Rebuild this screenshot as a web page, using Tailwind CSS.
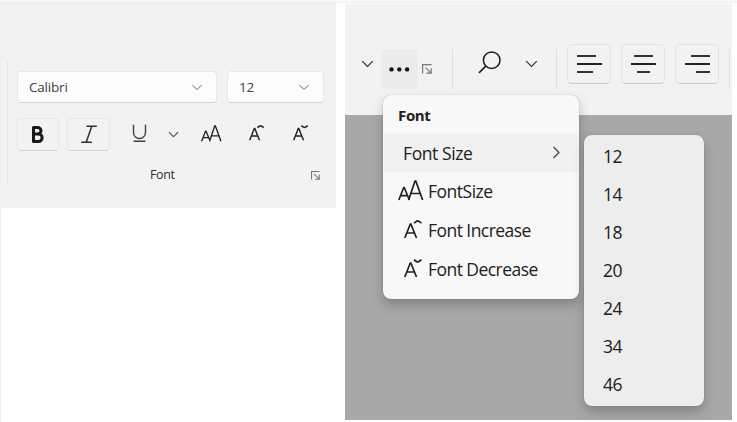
<!DOCTYPE html>
<html lang="en">
<head>
<meta charset="utf-8">
<title>Ribbon</title>
<script src="https://cdn.jsdelivr.net/npm/@tailwindcss/browser@4"></script>
</head>
<body class="relative h-[422px] w-[737px] overflow-hidden bg-white font-['Open_Sans','Noto_Sans',sans-serif] text-[#202020]">
<svg class="hidden">
  <defs>
    <symbol id="chev" viewBox="0 0 12 8"><path d="M.7 1.2 6 6.5l5.3-5.3" fill="none" stroke="currentColor" stroke-width="1.2"/></symbol>
    <symbol id="launch" viewBox="0 0 10 10"><path d="M.6 9.5V.6h8.9M3.6 3.6l5.2 5.2M9.2 4.2v5H4.3" fill="none" stroke="currentColor" stroke-width="1.2"/></symbol>
    <symbol id="aa" viewBox="0 0 26 21"><path d="M.8 20 5.7 7.5h.5L11.4 20M2.6 15.6h7M10.6 20 17 1h.8L24.6 20M13 13.5h9.4" fill="none" stroke="currentColor" stroke-width="1.7"/></symbol>
    <symbol id="aup" viewBox="0 0 19 19"><path d="M.8 18 6.3 4h.6l5.6 14M2.9 13h7.4M9.9 3C12 2.2 12.4.9 13.6.9S15.4 2.2 17.5 3" fill="none" stroke="currentColor" stroke-width="1.7"/></symbol>
    <symbol id="adn" viewBox="0 0 19 19"><path d="M.8 18 6.3 4h.6l5.6 14M2.9 13h7.4M9.9.9C12 1.700 12.400 3 13.600 3s1.800-1.300 3.900-2.100" fill="none" stroke="currentColor" stroke-width="1.7"/></symbol>
  </defs>
</svg>
<div class="flex h-[422px] flex-col">
  <div class="h-[3px] shrink-0 border-b border-[#f0f0f0] bg-[#f8f8f8]"></div>
  <div class="flex flex-1 border-l border-[#efefef]">
    <section class="h-[205px] w-[335px] bg-[#f2f2f2] pt-[57px] pl-[6px]">
      <div class="h-[124px] w-[329px] border-l border-[#e5e5e5] pt-[11px] pl-[9px]">
        <div class="flex gap-[11px]">
          <div class="flex h-8 w-[200px] items-center justify-between rounded border border-b-[#d2d2d2] border-[#e7e7e7] bg-[#fcfcfc] pr-[14px] pl-[11px] text-[13.500px] text-[#404040]"><span class="pt-px tracking-[-0.2px]">Calibri</span><svg class="h-[7px] w-[10px] text-[#606060]"><use href="#chev"/></svg></div>
          <div class="-ml-px flex h-8 w-[97px] items-center justify-between rounded border border-b-[#d2d2d2] border-[#e7e7e7] bg-[#fcfcfc] pr-[14px] pl-[11px] text-[13.500px] text-[#404040]"><span class="pt-px tracking-[-0.3px]">12</span><svg class="h-[7px] w-[10px] text-[#606060]"><use href="#chev"/></svg></div>
        </div>
        <div class="mt-[15px] flex h-[33px] items-center">
          <div class="flex h-[33px] w-[42px] items-center justify-center rounded border border-b-[#d2d2d2] border-[#e7e7e7]"><svg width="14" height="19" viewBox="0 0 14 19"><path d="M2.500 2.500h4.200a3.200 3.200 0 0 1 0 6.600H2.500zM2.500 9.100h5a3.600 3.600 0 0 1 0 7.300h-5z" fill="none" stroke="#181818" stroke-width="3" stroke-linejoin="round"/></svg></div>
          <div class="ml-2 flex h-[33px] w-[43px] items-center justify-center rounded border border-b-[#d2d2d2] border-[#e7e7e7]"><svg width="18" height="19" viewBox="0 0 18 19"><path d="M6.500 1.200h10.300M1.200 17.300h10.600M11.800 1.200 6.200 17.300" fill="none" stroke="#303030" stroke-width="1.500"/></svg></div>
          <svg class="-mt-[3px] ml-[22px]" width="15" height="19" viewBox="0 0 15 19"><path d="M1.500.8v7.700a6 6 0 0 0 12 0V.8M1.500 17.300h12" fill="none" stroke="#404040" stroke-width="1.400"/></svg>
          <svg class="ml-[21px] h-[7px] w-[11px] text-[#505050]"><use href="#chev"/></svg>
          <svg class="-mt-[2px] ml-[22px] h-[17px] w-[21px]"><use href="#aa"/></svg>
          <svg class="-mt-[4px] ml-[27px] h-[16px] w-[16px]"><use href="#aup"/></svg>
          <svg class="-mt-[4px] ml-[28px] h-[16px] w-[16px]"><use href="#adn"/></svg>
        </div>
        <div class="mt-[14px] flex h-5 items-center pl-[133px] text-[12.500px] text-[#303030]"><span class="w-[161px] pt-px tracking-[-0.35px]">Font</span><svg class="h-[9px] w-[9px] text-[#777]"><use href="#launch"/></svg></div>
      </div>
    </section>
    <section class="mt-px ml-[9px] h-[416px] w-[387px] bg-[#a8a8a8]">
      <div class="flex h-[111px] bg-[#f2f2f2] pt-10">
        <svg class="mt-4 ml-4 h-[8px] w-[13px] text-[#303030]"><use href="#chev"/></svg>
        <div class="mt-[5px] ml-2 flex h-10 w-[35px] items-center justify-center rounded bg-[#ebebeb]"><svg width="21" height="6" viewBox="0 0 21 6" fill="#151515"><circle cx="2.500" cy="3.400" r="2.200"/><circle cx="10.300" cy="3.400" r="2.200"/><circle cx="18.100" cy="3.400" r="2.200"/></svg></div>
        <svg class="mt-5 ml-[5px] size-[10px] text-[#777]"><use href="#launch"/></svg>
        <div class="mt-[5px] ml-5 h-10 w-px bg-[#dedede]"></div>
        <svg class="mt-[6px] ml-[25px]" width="24" height="25" viewBox="0 0 24 25"><circle cx="13.700" cy="10.200" r="8.300" fill="none" stroke="#1c1c1c" stroke-width="1.500"/><path d="M7.800 16.100 1 22.900" stroke="#1c1c1c" stroke-width="1.500"/></svg>
        <svg class="mt-4 ml-[23px] h-[8px] w-[13px] text-[#303030]"><use href="#chev"/></svg>
        <div class="mt-[5px] ml-[18px] h-10 w-px bg-[#dedede]"></div>
        <div class="ml-[10px] flex h-10 w-11 flex-col gap-[6px] rounded-[5px] border border-[#e2e2e2] border-b-[#c8c8c8] pt-[10px] pl-[9px]"><i class="h-[2px] w-[19px] bg-[#333]"></i><i class="h-[2px] w-[25px] bg-[#222]"></i><i class="h-[2px] w-4 bg-[#333]"></i></div>
        <div class="ml-[10px] flex h-10 w-11 flex-col items-center gap-[6px] rounded-[5px] border border-[#e2e2e2] border-b-[#c8c8c8] pt-[10px]"><i class="h-[2px] w-[19px] bg-[#333]"></i><i class="h-[2px] w-[25px] bg-[#222]"></i><i class="h-[2px] w-[13px] bg-[#333]"></i></div>
        <div class="ml-[10px] flex h-10 w-11 flex-col items-end gap-[6px] rounded-[5px] border border-[#e2e2e2] border-b-[#c8c8c8] pt-[10px] pr-2"><i class="h-[2px] w-[19px] bg-[#333]"></i><i class="h-[2px] w-[25px] bg-[#222]"></i><i class="h-[2px] w-[14px] bg-[#333]"></i></div>
        <div class="mt-[5px] ml-[10px] h-10 w-px bg-[#dedede]"></div>
      </div>
    </section>
  </div>
</div>

<!-- Overflow menu -->
<div class="absolute top-[95px] left-[383px] h-[204px] w-[196px] rounded-lg bg-[#f8f8f8] text-[17.500px] shadow-[0_0_1px_rgba(0,0,0,0.35),0_6px_12px_rgba(0,0,0,0.22)]">
  <div class="flex h-[39px] items-center pt-[2px] pl-[15px] text-[15px] font-bold tracking-[-0.35px]">Font</div>
  <div class="mx-px flex h-[38px] items-center bg-[#f1f1f1] pl-[19px]"><span class="w-[149px] pt-px tracking-[-0.4px]">Font Size</span><svg class="-mt-0.5" width="9" height="13" viewBox="0 0 9 13"><path d="M1.500 1 7 6.500 1.500 12" fill="none" stroke="#404040" stroke-width="1.200"/></svg></div>
  <div class="flex h-[39px] items-center pl-[15px]"><svg class="mr-1 -mt-[3px] h-[21px] w-[26px]"><use href="#aa"/></svg><span class="tracking-[-0.5px]">FontSize</span></div>
  <div class="flex h-[39px] items-center pl-[21px]"><svg class="mr-[5px] -mt-[3px] h-[19px] w-[19px]"><use href="#aup"/></svg><span class="tracking-[-0.55px]">Font Increase</span></div>
  <div class="flex h-[39px] items-center pl-[21px]"><svg class="mr-[5px] -mt-[3px] h-[19px] w-[19px]"><use href="#adn"/></svg><span class="tracking-[-0.55px]">Font Decrease</span></div>
</div>

<!-- Size submenu -->
<div class="absolute top-[135px] left-[584px] h-[271px] w-[120px] rounded-lg bg-[#ededed] pt-[2px] pl-[19px] text-[17.500px] leading-[38px] tracking-[-0.5px] shadow-[0_0_1px_rgba(0,0,0,0.35),0_6px_12px_rgba(0,0,0,0.22)]">
  <div>12</div><div>14</div><div>18</div><div>20</div><div>24</div><div>34</div><div>46</div>
</div>
</body>
</html>
